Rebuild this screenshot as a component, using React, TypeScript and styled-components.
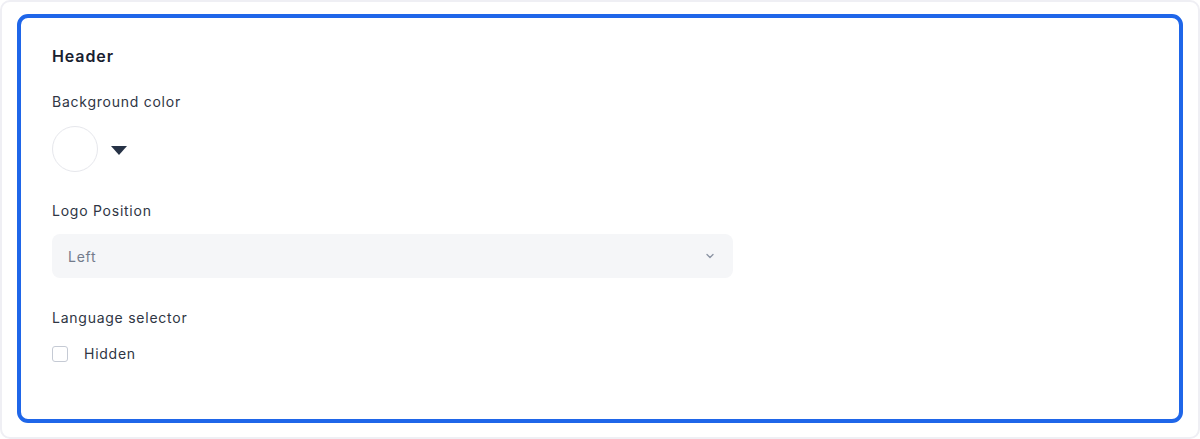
import { FC } from "react";
import styled, { createGlobalStyle } from "styled-components";

const GlobalStyle = createGlobalStyle`
   html, body {
      margin: 0;
      padding: 0;
      background: #ffffff;
   }
   body {
      font-family: Inter, "Noto Sans", sans-serif;
   }
`;

const Frame = styled.div`
   box-sizing: border-box;
   width: 1200px;
   height: 439px;
   border: 2px solid #efeff4;
   border-radius: 10px;
   background: #ffffff;
   padding: 12px 15px 14px 15px;
`;

const Card = styled.div`
   box-sizing: border-box;
   height: 409px;
   border: 4px solid #1f66e9;
   border-radius: 11px;
   padding: 26px 31px 0 31px;
   display: flex;
   flex-direction: column;
`;

const Title = styled.div`
   font-size: 16px;
   line-height: 24px;
   font-weight: 600;
   color: #18202f;
   letter-spacing: 0.9px;
`;

const Label = styled.div<{ $top: number }>`
   margin-top: ${(p) => p.$top}px;
   font-size: 14px;
   line-height: 20px;
   color: #2f3644;
   letter-spacing: 0.75px;
`;

const ColorRow = styled.div`
   margin-top: 14px;
   display: flex;
   align-items: center;
   gap: 13px;
`;

const Swatch = styled.div`
   box-sizing: border-box;
   width: 46px;
   height: 46px;
   border-radius: 50%;
   border: 1px solid #e6e7ec;
   background: #ffffff;
`;

const Caret = styled.div`
   width: 0;
   height: 0;
   margin-top: 2px;
   border-left: 8px solid transparent;
   border-right: 8px solid transparent;
   border-top: 9px solid #263246;
`;

const Select = styled.div`
   box-sizing: border-box;
   margin-top: 13px;
   width: 681px;
   height: 44px;
   border-radius: 8px;
   background: #f5f6f8;
   display: flex;
   align-items: center;
   justify-content: space-between;
   padding: 0 18px 0 16px;
   font-size: 14px;
   color: #737b8b;
   letter-spacing: 0.75px;
`;

const CheckRow = styled.label`
   margin-top: 16px;
   display: flex;
   align-items: center;
   gap: 16px;
   font-size: 14px;
   line-height: 20px;
   color: #2f3644;
   letter-spacing: 0.75px;
`;

const Box = styled.span`
   box-sizing: border-box;
   width: 16px;
   height: 16px;
   border: 1px solid #c5cad4;
   border-radius: 3px;
   background: #ffffff;
`;

const Chevron: FC = () => (
   <svg width="10" height="10" viewBox="0 0 10 10" fill="none">
      <path d="M2 3.5 L5 6.5 L8 3.5" stroke="#8a93a3" strokeWidth="1.3" strokeLinecap="round" strokeLinejoin="round" />
   </svg>
);

const App: FC = () => {
   return (
      <>
         <GlobalStyle />
         <Frame>
            <Card>
               <Title>Header</Title>
               <Label $top={24}>Background color</Label>
               <ColorRow>
                  <Swatch />
                  <Caret />
               </ColorRow>
               <Label $top={29}>Logo Position</Label>
               <Select>
                  <span>Left</span>
                  <Chevron />
               </Select>
               <Label $top={30}>Language selector</Label>
               <CheckRow>
                  <Box />
                  Hidden
               </CheckRow>
            </Card>
         </Frame>
      </>
   );
};

export default App;
